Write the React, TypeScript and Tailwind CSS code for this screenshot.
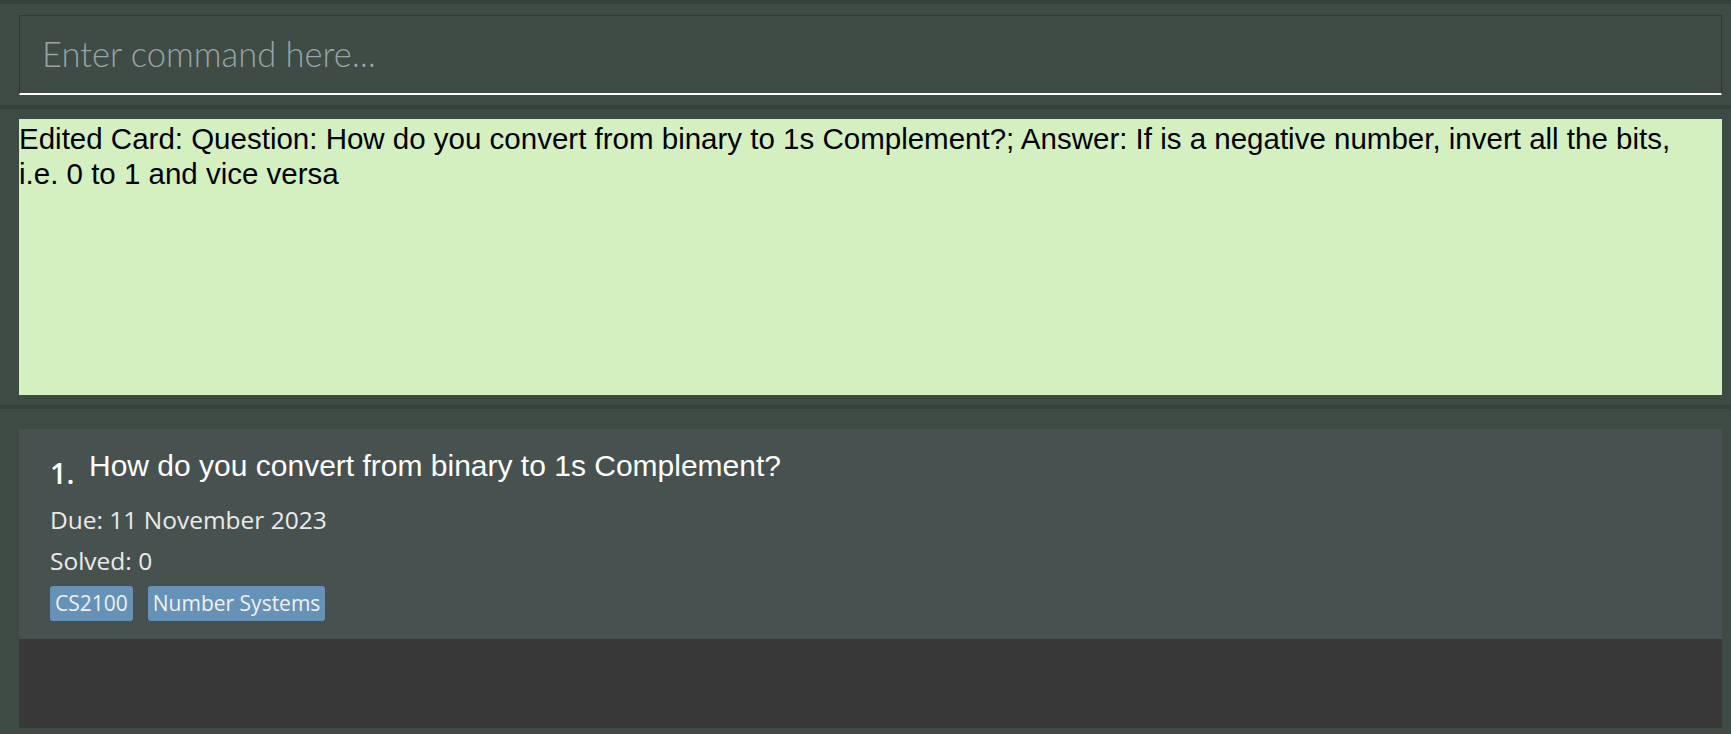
import React from "react";

export default function App() {
  return (
    <div className="w-[1731px] h-[734px] overflow-hidden bg-[#3e4b44] flex flex-col">
      <div className="h-[4px] bg-[#36413b]" />
      <div className="h-[101px] pt-[11px] pl-[19px] pr-[9px]">
        <div className="h-[80px] border-t border-l border-r border-[#363636] border-b-2 border-b-white bg-[#3f4b45] flex items-center pl-[22px]">
          <span className="text-[34.5px] font-light text-[#9aa3a6] leading-none" style={{ fontFamily: 'Lato, "Open Sans", sans-serif' }}>
            Enter command here...
          </span>
        </div>
      </div>
      <div className="h-[4px] bg-[#36413b]" />
      <div className="h-[296px] pt-[10px] pl-[19px] pr-[9px]">
        <div className="h-[276px] bg-[#d4f0c0] text-black text-[29.5px] leading-[35px] pt-[2px] pr-[40px]" style={{ fontFamily: '"Liberation Sans", Arial, sans-serif' }}>
          Edited Card: Question: How do you convert from binary to 1s Complement?; Answer: If is a negative number, invert all the bits, i.e. 0 to 1 and vice versa
        </div>
      </div>
      <div className="h-[4px] bg-[#36413b]" />
      <div className="flex-1 pt-[20px] pl-[19px] pr-[9px]">
        <div className="h-[210px] bg-[#475250] pl-[31px] pt-[18px]">
          <div className="flex items-end">
            <span className="text-[29px] font-semibold text-white w-[39px] leading-[40px] -mb-[2px]" style={{ fontFamily: '"Open Sans", sans-serif' }}>1.</span>
            <span className="text-[30px] text-white leading-[38px] mb-[6px]" style={{ fontFamily: '"Liberation Sans", Arial, sans-serif' }}>
              How do you convert from binary to 1s Complement?
            </span>
          </div>
          <div className="text-[24.5px] text-[#eaeaea] leading-[32px] mt-[13px]" style={{ fontFamily: '"Open Sans", sans-serif' }}>Due: 11 November 2023</div>
          <div className="text-[24.5px] text-[#eaeaea] leading-[32px] mt-[9px]" style={{ fontFamily: '"Open Sans", sans-serif' }}>Solved: 0</div>
          <div className="flex gap-[15px] mt-[9px]" style={{ fontFamily: '"Open Sans", sans-serif' }}>
            <span className="bg-[#6792b8] text-[#f0f0f0] text-[21px] leading-[35px] px-[5px] rounded-[3px]">CS2100</span>
            <span className="bg-[#6792b8] text-[#f0f0f0] text-[21px] leading-[35px] px-[5px] rounded-[3px]">Number Systems</span>
          </div>
        </div>
        <div className="h-[89px] bg-[#383838]" />
      </div>
    </div>
  );
}
